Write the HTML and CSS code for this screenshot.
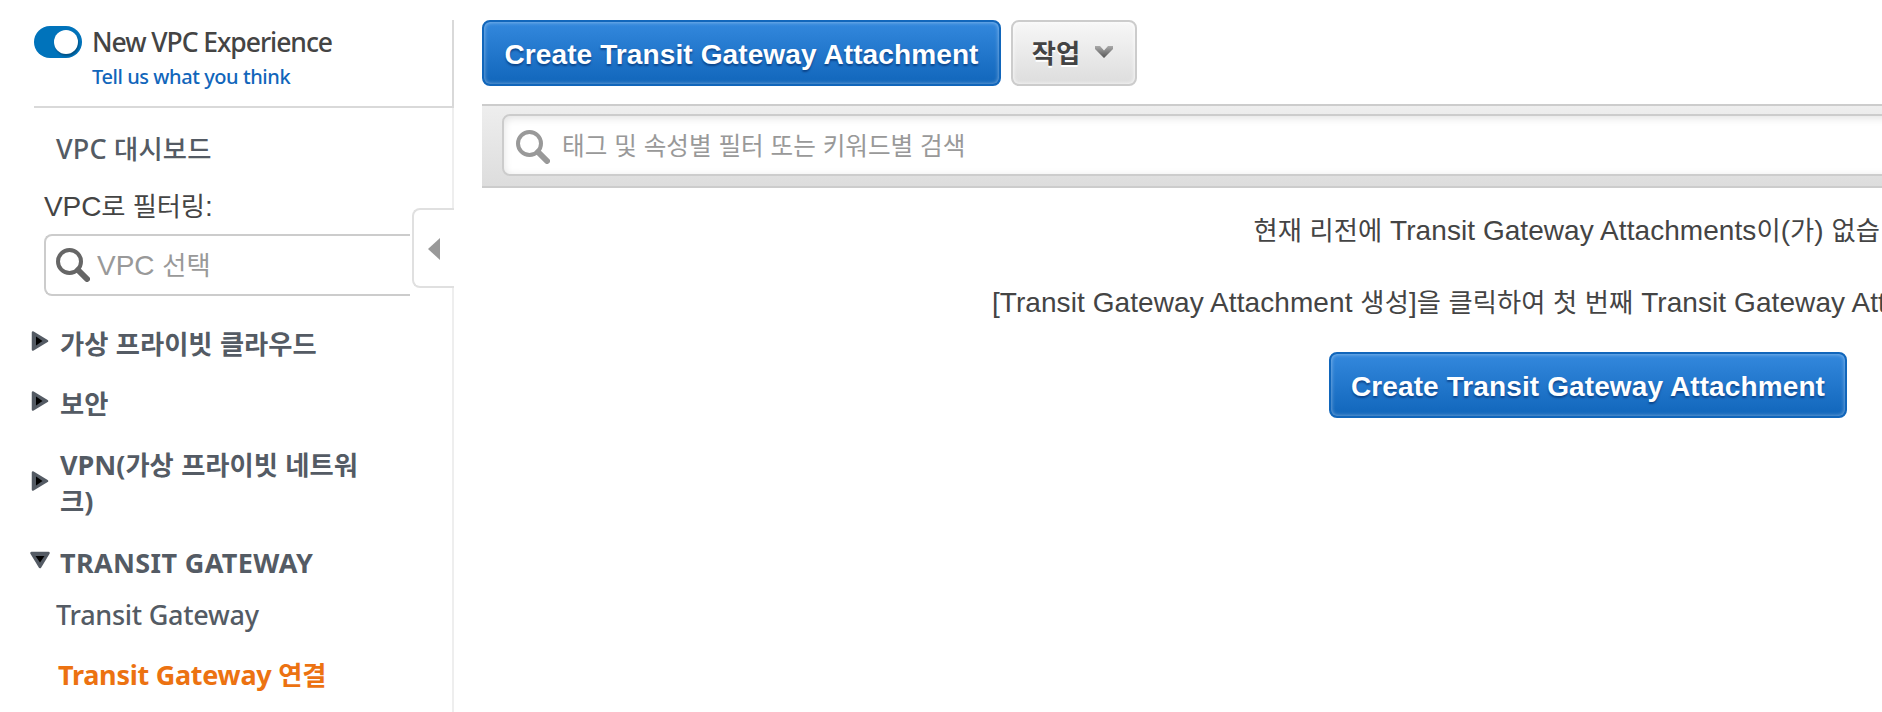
FILE: index.html
```html
<!DOCTYPE html>
<html lang="ko">
<head>
<meta charset="utf-8">
<title>Transit Gateway Attachments</title>
<link rel="stylesheet" href="styles.css">
</head>
<body>
<div class="app">
  <nav class="sidebar">
    <header class="experience">
      <span class="toggle"><span class="knob"></span></span>
      <div class="experience-text">
        <div class="experience-title"><span>New VPC Experience</span></div>
        <a class="feedback"><span>Tell us what you think</span></a>
      </div>
    </header>
    <a class="item dashboard"><span>VPC <span class="ko">대시보드</span></span></a>
    <div class="filter-label"><span>VPC<span class="ko">로 필터링</span>:</span></div>
    <div class="filter-box">
      <svg class="lens dark" viewBox="0 0 34 34"><circle cx="13.500" cy="13.500" r="11.5"/><path d="M22 22L31 31"/></svg>
      <span class="filter-hint">VPC <span class="ko">선택</span></span>
    </div>
    <div class="group g1"><svg class="tri" viewBox="0 0 20 20"><path class="o" d="M3 1.500L17 10L3 18.500z"/><path d="M6 5.500L12.500 10L6 14.500z"/></svg><span class="ko">가상 프라이빗 클라우드</span></div>
    <div class="group g2"><svg class="tri" viewBox="0 0 20 20"><path class="o" d="M3 1.500L17 10L3 18.500z"/><path d="M6 5.500L12.500 10L6 14.500z"/></svg><span class="ko">보안</span></div>
    <div class="group g3"><svg class="tri" viewBox="0 0 20 20"><path class="o" d="M3 1.500L17 10L3 18.500z"/><path d="M6 5.500L12.500 10L6 14.500z"/></svg><span>VPN(<span class="ko">가상 프라이빗 네트워<br>크</span>)</span></div>
    <div class="group g4"><svg class="tri down" viewBox="0 0 20 20"><path class="o" d="M1.500 3L18.500 3L10 17z"/><path d="M5.500 6L14.500 6L10 12.500z"/></svg><span class="caps">TRANSIT GATEWAY</span></div>
    <a class="item tgw"><span>Transit Gateway</span></a>
    <a class="item active"><span>Transit Gateway <span class="ko">연결</span></span></a>
    <div class="collapse"><svg viewBox="0 0 12 22"><path d="M12 0V22L0 11z"/></svg></div>
  </nav>
  <main class="main">
    <div class="toolbar">
      <button class="btn primary"><span>Create Transit Gateway Attachment</span></button>
      <button class="btn actions"><span class="ko">작업</span><svg viewBox="0 0 20 14"><defs><linearGradient id="chev" x1="0" y1="0" x2="0" y2="1"><stop offset="0" stop-color="#aaa"/><stop offset="1" stop-color="#555"/></linearGradient></defs><path d="M1 1H6L10 5.500L14 1H19V4L10 13L1 4z" fill="url(#chev)"/></svg></button>
    </div>
    <div class="searchbar">
      <div class="search">
        <svg class="lens" viewBox="0 0 34 34"><circle cx="13.500" cy="13.500" r="11.500"/><path d="M22 22L31 31"/></svg>
        <span class="ko">태그 및 속성별 필터 또는 키워드별 검색</span>
      </div>
    </div>
    <section class="empty">
      <p class="notice"><span class="ko">현재 리전에</span> Transit Gateway Attachments<span class="ko">이</span>(<span class="ko">가</span>) <span class="ko">없습니다</span>.</p>
      <p class="advice">[Transit Gateway Attachment <span class="ko">생성</span>]<span class="ko">을 클릭하여 첫 번째</span> Transit Gateway Attachment<span class="ko">를 생성하십시오</span>.</p>
      <button class="btn primary"><span>Create Transit Gateway Attachment</span></button>
    </section>
  </main>
</div>
</body>
</html>
```

FILE: styles.css
```css
* { box-sizing: border-box; }
body {
  margin: 0;
  height: 712px;
  overflow: hidden;
  background: #fff;
  color: #444;
  font: 28px/36px "Liberation Sans", "Noto Sans CJK KR", sans-serif;
  white-space: nowrap;
}
.ko {
  font-family: "Noto Sans CJK KR", sans-serif;
  font-size: 26.3px;
  line-height: 0;
}
.app { display: flex; height: 712px; overflow: hidden; }

.sidebar {
  position: relative;
  flex: none;
  width: 454px;
  padding: 20px 0 0 34px;
  font-family: "Noto Sans", "Noto Sans CJK KR", sans-serif;
  font-size: 27px;
  color: #545b64;
  background: linear-gradient(#eee, #eee) 452px 108px / 2px 100% no-repeat;
}
.experience {
  display: flex;
  height: 88px;
  padding-top: 2px;
  border-right: 2px solid #d9d9d9;
  border-bottom: 2px solid #d9d9d9;
}
.toggle {
  flex: none;
  width: 48px;
  height: 32px;
  margin: 4px 10px 0 0;
  padding: 4px 4px 4px 20px;
  border-radius: 16px;
  background: #0073bb;
}
.knob {
  display: block;
  width: 24px;
  height: 24px;
  border-radius: 50%;
  background: #fff;
  box-shadow: 1px 2px 2px rgba(0, 0, 0, .3);
}
.experience-title { padding-top: 2px; color: #444; font-size: 26.500px; font-weight: 500; letter-spacing: -1.05px; }
.feedback {
  display: block;
  margin-top: 2px;
  font-size: 20px;
  font-weight: 500;
  line-height: 30px;
  letter-spacing: -.43px;
  color: #1166bb;
}
.item { display: block; padding-left: 22px; font-weight: 500; letter-spacing: -.27px; }
.dashboard { margin-top: 23px; letter-spacing: .2px; }
.filter-label {
  margin-top: 22px;
  padding-left: 10px;
  font-family: "Liberation Sans", sans-serif;
  font-size: 28px;
  letter-spacing: -.1px;
  color: #444;
}
.filter-box {
  display: flex;
  align-items: center;
  width: 366px;
  height: 62px;
  margin: 9px 0 0 10px;
  padding-left: 10px;
  border: 2px solid #ccc;
  border-right: 0;
  border-radius: 8px 0 0 8px;
  font-family: "Liberation Sans", sans-serif;
  font-size: 28px;
  color: #999;
}
.lens { flex: none; width: 34px; height: 34px; fill: none; stroke: #999; stroke-width: 4; }
.lens path { stroke-width: 6; stroke-linecap: round; }
.lens.dark { stroke: #666; }
.filter-hint { margin-left: 7px; padding-top: 1px; }
.group {
  display: flex;
  align-items: center;
  gap: 10px;
  min-height: 36px;
  margin-left: -4px;
  font-weight: 700;
}
.tri { flex: none; width: 20px; height: 20px; margin-bottom: 4px; fill: #000; }
.tri .o { fill: #545b64; stroke: #545b64; stroke-width: 2.500; stroke-linejoin: round; }
.g1 { margin-top: 29px; }
.g2 { margin-top: 24px; }
.g3 { margin-top: 26px; line-height: 36px; }
.g4 { margin-top: 26px; letter-spacing: .36px; }
.g4 .tri { margin-bottom: 6px; }
.tgw { margin-top: 16px; }
.active { margin-top: 24px; padding-left: 24px; font-weight: 700; color: #ec7211; }
.collapse {
  position: absolute;
  left: 412px;
  top: 208px;
  display: flex;
  align-items: center;
  width: 42px;
  height: 80px;
  padding: 2px 0 0 14px;
  border: 2px solid #e0e0e0;
  border-right: 0;
  border-radius: 8px 0 0 8px;
  background: #fff;
}
.collapse svg { width: 12px; height: 22px; fill: #999; }

.main { flex: none; width: 2212px; margin-left: 28px; padding-top: 20px; }
.toolbar { display: flex; gap: 10px; }
.btn {
  display: flex;
  align-items: center;
  justify-content: center;
  height: 66px;
  padding: 3px 0 0;
  border: 2px solid #ccc;
  border-radius: 8px;
  font: bold 28px/36px "Liberation Sans", sans-serif;
}
.primary {
  width: 519px;
  border-color: #1166bb;
  background: linear-gradient(#3388dd, #1166bb);
  box-shadow: inset 0 0 4px rgba(255, 255, 255, .5);
  color: #fff;
  letter-spacing: .11px;
  text-shadow: 0 2px 2px rgba(0, 40, 100, .6);
}
.actions {
  width: 126px;
  padding: 0 2px 2px 0;
  gap: 14px;
  background: linear-gradient(#f7f7f7, #ddd);
  box-shadow: inset 0 0 4px #fff;
  color: #444;
  text-shadow: 0 2px 0 #fff;
}
.actions svg { width: 20px; height: 14px; }
.searchbar {
  height: 84px;
  margin-top: 18px;
  padding: 8px 0 0 20px;
  border-top: 2px solid #ccc;
  border-bottom: 2px solid #ccc;
  background: linear-gradient(#eee, #ddd);
}
.search {
  display: flex;
  align-items: center;
  height: 62px;
  padding-left: 12px;
  gap: 12px;
  border: 2px solid #ccc;
  border-radius: 8px;
  background: #fff;
  box-shadow: inset 0 2px 8px rgba(0, 0, 0, .12);
  color: #999;
}
.search .lens { margin-top: 4px; }
.search .ko { padding-bottom: 2px; font-size: 24.6px; }
.empty { display: flex; flex-direction: column; align-items: center; padding-top: 25px; }
.empty p { margin: 0 0 36px; }
.notice { padding-left: 14px; letter-spacing: .06px; }
.advice { padding-right: 5px; letter-spacing: .08px; }
.empty .btn { width: 518px; margin-top: -5px; }
```
